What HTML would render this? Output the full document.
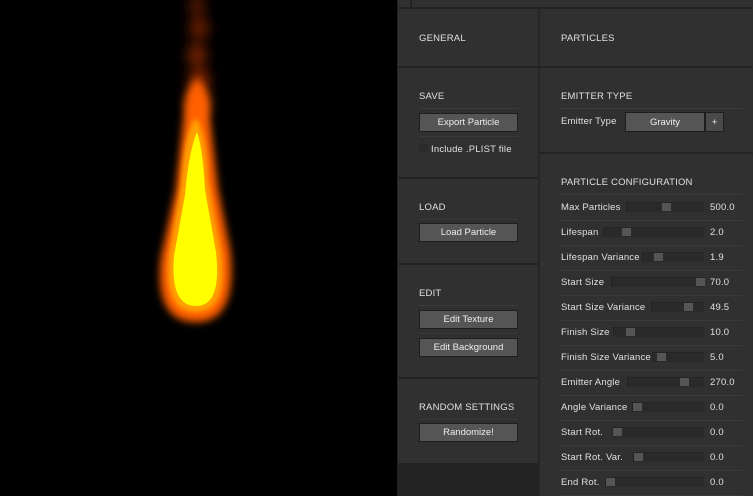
<!DOCTYPE html>
<html><head><style>
*{margin:0;padding:0;box-sizing:border-box}
body{width:753px;height:496px;background:#000;position:relative;overflow:hidden;font-family:"Liberation Sans",sans-serif;font-size:9.5px;color:#e0e0e0}
.a{position:absolute}
.p{background:#303030}
.h{position:absolute;height:2px;background:#232323}
.sep{position:absolute;height:1px;background:#3a3a3a}
.t{position:absolute;white-space:nowrap;letter-spacing:0.2px}
.btn{position:absolute;background:#555;border:1px solid #1e1e1e;color:#eee;text-align:center;line-height:18px;font-size:9.5px}
.tr{position:absolute;height:10px;background:#2a2a2a;border-top:1px solid #252525;border-left:1px solid #222}
.th{position:absolute;width:9px;height:8px;background:#555;top:0}
</style></head><body>
<svg class="a" style="left:0;top:0" width="397" height="496">
<defs>
<filter id="b0" x="-1" y="-1" width="3" height="3"><feGaussianBlur stdDeviation="6"/></filter>
<filter id="b1" x="-1" y="-1" width="3" height="3"><feGaussianBlur stdDeviation="4"/></filter>
<filter id="b2" x="-1" y="-1" width="3" height="3"><feGaussianBlur stdDeviation="2"/></filter>
</defs>
<g filter="url(#b0)" fill="#7a2200">
<ellipse cx="197" cy="5" rx="8" ry="10" opacity="0.7"/>
<ellipse cx="199" cy="28" rx="10" ry="12" opacity="0.8"/>
<ellipse cx="197" cy="55" rx="10" ry="12" opacity="0.9"/>
<ellipse cx="199" cy="80" rx="11" ry="12"/>
<ellipse cx="198" cy="102" rx="12" ry="14" fill="#a83a00"/>
</g>
<path d="M197 78 Q210 90 210 120 L218 190 L230 250 Q238 322 196 322 Q154 322 161 258 L176 190 L184 115 Q186 88 197 78Z" fill="#ff6000" filter="url(#b1)"/>
<path d="M196 118 Q206 130 208 180 L221 250 Q229 312 196 312 Q163 312 169 255 L181 185 Q185 128 196 118Z" fill="#ffa000" filter="url(#b2)"/>
<path d="M197 132 Q203 150 205 190 L216 252 Q222 306 196 306 Q170 306 174 256 L185 195 Q189 150 197 132Z" fill="#ffff00"/>
</svg>
<div class="a" style="left:397px;top:0;width:356px;height:496px;background:#222"></div>
<div class="a p" style="left:398px;top:0;width:355px;height:496px"></div>
<div class="a" style="left:398px;top:463px;width:140px;height:33px;background:#232323"></div>
<div class="h" style="left:398px;top:7px;width:355px"></div>
<div class="a" style="left:410px;top:0;width:2px;height:8px;background:#222"></div>
<div class="a" style="left:538px;top:8px;width:2px;height:488px;background:#262626"></div>
<div class="h" style="left:398px;top:66px;width:355px"></div>
<div class="h" style="left:398px;top:177px;width:140px"></div>
<div class="h" style="left:398px;top:263px;width:140px"></div>
<div class="h" style="left:398px;top:377px;width:140px"></div>
<div class="h" style="left:540px;top:152px;width:213px"></div>

<div class="t" style="left:419px;top:33px">GENERAL</div>
<div class="t" style="left:561px;top:33px">PARTICLES</div>
<div class="t" style="left:419px;top:91px">SAVE</div>
<div class="sep" style="left:419px;top:108px;width:99px"></div>
<div class="btn" style="left:419px;top:113px;width:99px;height:19px">Export Particle</div>
<div class="sep" style="left:419px;top:136px;width:99px"></div>
<div class="a" style="left:419px;top:144px;width:9px;height:9px;background:#2b2b2b"></div>
<div class="t" style="left:431px;top:144px">Include .PLIST file</div>
<div class="t" style="left:419px;top:202px">LOAD</div>
<div class="sep" style="left:419px;top:219px;width:99px"></div>
<div class="btn" style="left:419px;top:223px;width:99px;height:19px">Load Particle</div>
<div class="t" style="left:419px;top:288px">EDIT</div>
<div class="sep" style="left:419px;top:305px;width:99px"></div>
<div class="btn" style="left:419px;top:310px;width:99px;height:19px">Edit Texture</div>
<div class="sep" style="left:419px;top:333px;width:99px"></div>
<div class="btn" style="left:419px;top:338px;width:99px;height:19px">Edit Background</div>
<div class="t" style="left:419px;top:402px">RANDOM SETTINGS</div>
<div class="sep" style="left:419px;top:419px;width:99px"></div>
<div class="btn" style="left:419px;top:423px;width:99px;height:19px">Randomize!</div>

<div class="t" style="left:561px;top:91px">EMITTER TYPE</div>
<div class="sep" style="left:559px;top:108px;width:184px"></div>
<div class="t" style="left:561px;top:116px">Emitter Type</div>
<div class="btn" style="left:625px;top:112px;width:80px;height:20px;line-height:19px">Gravity</div>
<div class="btn" style="left:705px;top:112px;width:19px;height:20px;line-height:19px;background:#4a4a4a">+</div>
<div class="t" style="left:561px;top:177px">PARTICLE CONFIGURATION</div>
<div class="sep" style="left:559px;top:194px;width:184px"></div>

<div id="rows"></div>
<script>
var r=[["Max Particles",626,661,"500.0"],["Lifespan",603,621,"2.0"],["Lifespan Variance",642,653,"1.9"],["Start Size",611,695,"70.0"],["Start Size Variance",651,683,"49.5"],["Finish Size",613,625,"10.0"],["Finish Size Variance",652,656,"5.0"],["Emitter Angle",627,679,"270.0"],["Angle Variance",632,632,"0.0"],["Start Rot.",612,612,"0.0"],["Start Rot. Var.",633,633,"0.0"],["End Rot.",605,605,"0.0"]];
var h="";r.forEach(function(x,i){var y=202+i*25;
h+='<div class="t" style="left:561px;top:'+y+'px">'+x[0]+'</div>';
h+='<div class="tr" style="left:'+x[1]+'px;top:'+y+'px;width:'+(704-x[1])+'px"><div class="th" style="left:'+(x[2]-x[1])+'px"></div></div>';
h+='<div class="t" style="left:710px;top:'+y+'px">'+x[3]+'</div>';
h+='<div class="sep" style="left:559px;top:'+(y+18)+'px;width:184px"></div>';});
document.getElementById("rows").innerHTML=h;
</script>
</body></html>
